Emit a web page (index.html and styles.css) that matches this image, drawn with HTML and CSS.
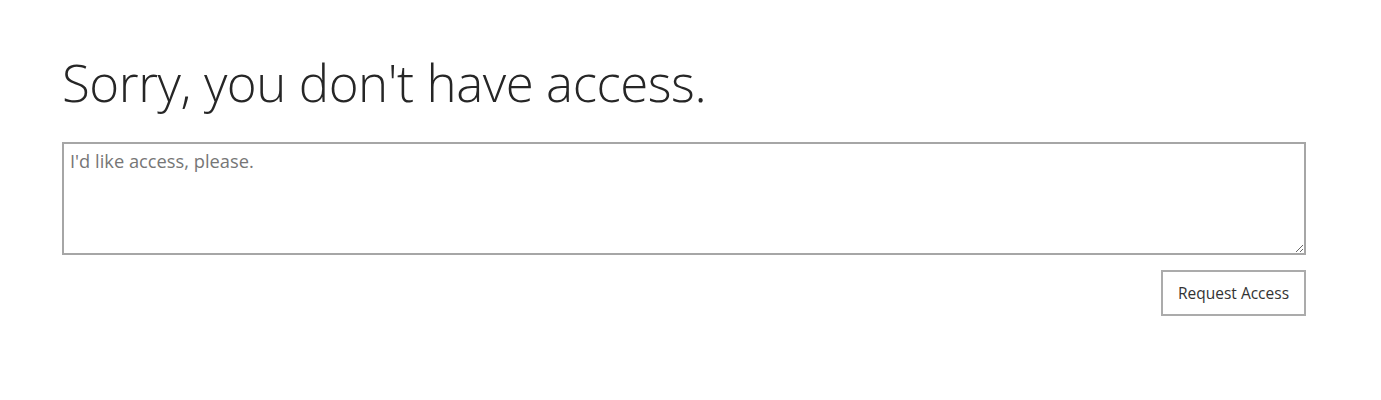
FILE: index.html
```html
<!DOCTYPE html>
<html>
<head>
<meta charset="utf-8">
<link rel="stylesheet" href="styles.css">
</head>
<body>
<main class="page">
  <h1 class="title">Sorry, you don't have access.</h1>
  <textarea class="message" placeholder="I'd like access, please."></textarea>
  <div class="actions">
    <button class="request">Request Access</button>
  </div>
</main>
</body>
</html>
```
FILE: styles.css
```css
html, body {
  margin: 0;
  padding: 0;
  background: #fff;
}
body {
  font-family: "Open Sans", "Liberation Sans", sans-serif;
  color: #333;
}
.page {
  padding: 48px 76px 0 62px;
  display: flex;
  flex-direction: column;
}
.title {
  margin: 0 0 26px 0;
  font-weight: 300;
  font-size: 51px;
  line-height: 68px;
  color: #262626;
  letter-spacing: -0.45px;
}
.message {
  box-sizing: border-box;
  width: 1244px;
  height: 113px;
  border: 2px solid #a6a6a6;
  padding: 4px 6px;
  font-family: "Open Sans", "Liberation Sans", sans-serif;
  font-size: 18.3px;
  color: #444;
  resize: vertical;
  display: block;
  margin: 0;
}
.message::placeholder {
  color: #767676;
  opacity: 1;
}
.actions {
  width: 1244px;
  display: flex;
  justify-content: flex-end;
  margin-top: 15px;
}
.request {
  box-sizing: border-box;
  width: 145px;
  height: 46px;
  border: 2px solid #ababab;
  background: #fff;
  font-family: "Open Sans", "Liberation Sans", sans-serif;
  font-size: 15.5px;
  color: #333;
  padding: 0;
}
```
